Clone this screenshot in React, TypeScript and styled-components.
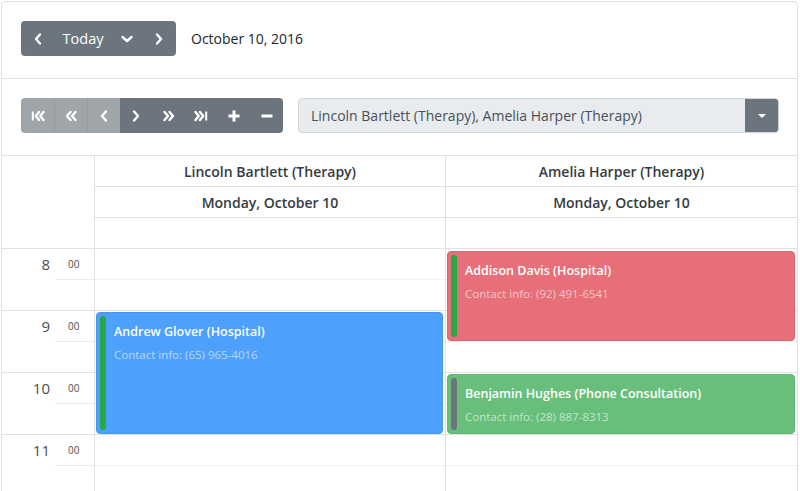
import React from 'react';
import styled, { createGlobalStyle } from 'styled-components';

const Global = createGlobalStyle`
  * { box-sizing: border-box; }
  html, body { margin: 0; padding: 0; background: #fff; overflow: hidden; }
  body { padding: 1px; font-family: "Open Sans", "Noto Sans", "DejaVu Sans", sans-serif; color: #212529; }
`;

const Scheduler = styled.div`
  width: 797px;
  height: 540px;
  border: 1px solid #dee2e6;
  border-radius: 4px;
  overflow: hidden;
`;

const Toolbar = styled.div`
  display: flex;
  align-items: center;
  gap: 15px;
  padding: 19px 18px 22px 19px;
  border-bottom: 1px solid #dee2e6;
`;

const ButtonGroup = styled.div`
  display: flex;
  height: 35px;
  border-radius: 4px;
  overflow: hidden;
`;

const Btn = styled.button<{ $w: number; $disabled?: boolean; $sep?: boolean }>`
  width: ${p => p.$w}px;
  height: 35px;
  border: none;
  margin: 0;
  padding: 0;
  display: flex;
  align-items: center;
  justify-content: center;
  background: ${p => (p.$disabled ? '#a0a5aa' : '#6c757d')};
  border-left: ${p => (p.$sep ? '1px solid #969ba0' : 'none')};
  color: #fff;
  font-family: inherit;
  font-size: 14.5px;
  cursor: pointer;
`;

const DateLabel = styled.span`
  font-size: 14px;
  color: #212529;
`;

const Select = styled.div`
  flex: 1;
  display: flex;
  height: 35px;
  border: 1px solid #ced4da;
  border-radius: 4px;
  background: #e9ecef;
  overflow: hidden;
`;

const SelectText = styled.div`
  flex: 1;
  padding: 0 12px;
  line-height: 33px;
  font-size: 14px;
  color: #495057;
  white-space: nowrap;
`;

const SelectButton = styled.div`
  width: 33px;
  background: #6c757d;
  display: flex;
  align-items: center;
  justify-content: center;
`;

const Caret = styled.span`
  width: 0;
  height: 0;
  border-left: 4.5px solid transparent;
  border-right: 4.5px solid transparent;
  border-top: 4.5px solid #fff;
`;

const Grid = styled.div`
  display: grid;
  grid-template-columns: 93px 1fr 1fr;
`;

const Corner = styled.div`
  border-right: 1px solid #dee2e6;
  border-bottom: 1px solid #dee2e6;
`;

const HeaderColumn = styled.div<{ $last?: boolean }>`
  display: flex;
  flex-direction: column;
  border-right: ${p => (p.$last ? 'none' : '1px solid #dee2e6')};
`;

const HeaderCell = styled.div`
  height: 31px;
  border-bottom: 1px solid #dee2e6;
  display: flex;
  align-items: center;
  justify-content: center;
  font-size: 14px;
  font-weight: 600;
  color: #343a40;
`;

const TimeColumn = styled.div`
  border-right: 1px solid #dee2e6;
`;

const HourBlock = styled.div`
  height: 62px;
  border-bottom: 1px solid #dee2e6;
  display: grid;
  grid-template-columns: 53px 1fr;
`;

const HourNum = styled.div`
  text-align: right;
  padding: 5px 5px 0 0;
  font-size: 15px;
  line-height: 20px;
  color: #495057;
`;

const HalfCell = styled.div`
  height: 31px;
  border-bottom: 1px solid #e9ecef;
  padding: 7px 0 0 13px;
  font-size: 10px;
  line-height: 16px;
  color: #495057;
`;

const DayColumn = styled.div<{ $last?: boolean }>`
  position: relative;
  border-right: ${p => (p.$last ? 'none' : '1px solid #dee2e6')};
`;

const Slot = styled.div<{ $hour: boolean }>`
  height: 31px;
  border-bottom: 1px solid ${p => (p.$hour ? '#dee2e6' : '#eef0f2')};
`;

const Event = styled.div<{ $bg: string; $border: string }>`
  position: absolute;
  left: 1px;
  right: 2px;
  background: ${p => p.$bg};
  border: 1px solid ${p => p.$border};
  border-radius: 4px;
  padding: 9px 10px 0 17px;
  color: #fff;
  overflow: hidden;
`;

const Marker = styled.div<{ $color: string }>`
  position: absolute;
  left: 3px;
  top: 3px;
  bottom: 3px;
  width: 6px;
  border-radius: 3px;
  background: ${p => p.$color};
`;

const EventTitle = styled.div`
  font-size: 12.5px;
  font-weight: 600;
  line-height: 20px;
  white-space: nowrap;
`;

const EventInfo = styled.div`
  margin-top: 3px;
  font-size: 11.5px;
  line-height: 20px;
  color: rgba(255, 255, 255, 0.6);
  white-space: nowrap;
`;

const Icon = ({ children, w = 14, h = 14 }: { children: React.ReactNode; w?: number; h?: number }) => (
  <svg width={w} height={h} viewBox={`0 0 ${w} ${h}`} fill="none" stroke="#fff" strokeWidth={2.4} strokeLinecap="round" strokeLinejoin="round">
    {children}
  </svg>
);

const ChevL = () => <Icon w={10} h={14}><polyline points="7,2.5 3,7 7,11.5" /></Icon>;
const ChevR = () => <Icon w={10} h={14}><polyline points="3,2.5 7,7 3,11.5" /></Icon>;
const ChevD = () => <Icon w={14} h={10}><polyline points="2.5,3 7,7 11.5,3" /></Icon>;
const DblL = () => <Icon w={14} h={14}><polyline points="6.5,3 3,7 6.5,11" /><polyline points="11.5,3 8,7 11.5,11" /></Icon>;
const DblR = () => <Icon w={14} h={14}><polyline points="2.5,3 6,7 2.5,11" /><polyline points="7.5,3 11,7 7.5,11" /></Icon>;
const FirstI = () => <Icon w={14} h={14}><line x1="1.8" y1="2.5" x2="1.8" y2="11.5" strokeWidth={2} strokeLinecap="butt" /><polyline points="8,3 4.8,7 8,11" /><polyline points="12.5,3 9.3,7 12.5,11" /></Icon>;
const LastI = () => <Icon w={14} h={14}><polyline points="1.5,3 4.7,7 1.5,11" /><polyline points="6,3 9.2,7 6,11" /><line x1="12.2" y1="2.5" x2="12.2" y2="11.5" strokeWidth={2} strokeLinecap="butt" /></Icon>;
const Plus = () => <Icon w={14} h={14}><line x1="7" y1="1.5" x2="7" y2="12.5" strokeWidth={3} strokeLinecap="butt" /><line x1="1.5" y1="7" x2="12.5" y2="7" strokeWidth={3} strokeLinecap="butt" /></Icon>;
const Minus = () => <Icon w={14} h={14}><line x1="1.5" y1="7" x2="12.5" y2="7" strokeWidth={3} strokeLinecap="butt" /></Icon>;

type Ev = { title: string; info: string; bg: string; border: string; marker: string; top: number; height: number };

const hours = [8, 9, 10, 11];

const columns: { resource: string; events: Ev[] }[] = [
  {
    resource: 'Lincoln Bartlett (Therapy)',
    events: [
      { title: 'Andrew Glover (Hospital)', info: 'Contact info: (65) 965-4016', bg: '#4da0fb', border: '#4696ee', marker: '#28a745', top: 63, height: 122 },
    ],
  },
  {
    resource: 'Amelia Harper (Therapy)',
    events: [
      { title: 'Addison Davis (Hospital)', info: 'Contact info: (92) 491-6541', bg: '#e76f7a', border: '#de6570', marker: '#28a745', top: 2, height: 90 },
      { title: 'Benjamin Hughes (Phone Consultation)', info: 'Contact info: (28) 887-8313', bg: '#68bf7b', border: '#5fb572', marker: '#6c757d', top: 125, height: 60 },
    ],
  },
];

export default function App() {
  return (
    <>
      <Global />
      <Scheduler>
        <Toolbar>
          <ButtonGroup>
            <Btn $w={34}><ChevL /></Btn>
            <Btn $w={56}>Today</Btn>
            <Btn $w={31}><ChevD /></Btn>
            <Btn $w={34}><ChevR /></Btn>
          </ButtonGroup>
          <DateLabel>October 10, 2016</DateLabel>
        </Toolbar>
        <Toolbar>
          <ButtonGroup>
            <Btn $w={33} $disabled><FirstI /></Btn>
            <Btn $w={33} $disabled $sep><DblL /></Btn>
            <Btn $w={33} $disabled $sep><ChevL /></Btn>
            <Btn $w={32}><ChevR /></Btn>
            <Btn $w={33}><DblR /></Btn>
            <Btn $w={32}><LastI /></Btn>
            <Btn $w={33}><Plus /></Btn>
            <Btn $w={33}><Minus /></Btn>
          </ButtonGroup>
          <Select>
            <SelectText>Lincoln Bartlett (Therapy), Amelia Harper (Therapy)</SelectText>
            <SelectButton><Caret /></SelectButton>
          </Select>
        </Toolbar>
        <Grid>
          <Corner />
          {columns.map((c, i) => (
            <HeaderColumn key={c.resource} $last={i === columns.length - 1}>
              <HeaderCell>{c.resource}</HeaderCell>
              <HeaderCell>Monday, October 10</HeaderCell>
              <HeaderCell />
            </HeaderColumn>
          ))}
          <TimeColumn>
            {hours.map(h => (
              <HourBlock key={h}>
                <HourNum>{h}</HourNum>
                <HalfCell>00</HalfCell>
              </HourBlock>
            ))}
          </TimeColumn>
          {columns.map((c, i) => (
            <DayColumn key={c.resource} $last={i === columns.length - 1}>
              {hours.flatMap(h => [h, h + 0.5]).map(t => (
                <Slot key={t} $hour={t % 1 !== 0} />
              ))}
              {c.events.map(e => (
                <Event key={e.title} $bg={e.bg} $border={e.border} style={{ top: e.top, height: e.height }}>
                  <Marker $color={e.marker} />
                  <EventTitle>{e.title}</EventTitle>
                  <EventInfo>{e.info}</EventInfo>
                </Event>
              ))}
            </DayColumn>
          ))}
        </Grid>
      </Scheduler>
    </>
  );
}
